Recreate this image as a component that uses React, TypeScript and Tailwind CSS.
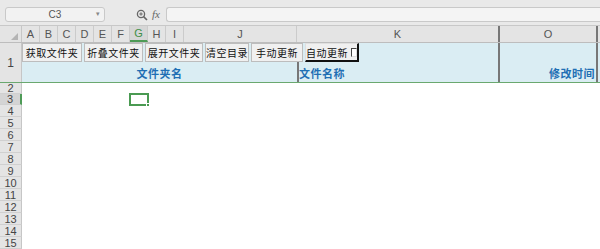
import React from "react";

const cjk = { fontFamily: '"Noto Sans CJK SC", "Noto Sans", sans-serif' };
const latin = { fontFamily: '"Liberation Sans", Arial, sans-serif' };

const cols: { name: string; w: number }[] = [
  { name: "A", w: 18 },
  { name: "B", w: 18 },
  { name: "C", w: 18 },
  { name: "D", w: 18 },
  { name: "E", w: 18 },
  { name: "F", w: 18 },
  { name: "G", w: 18 },
  { name: "H", w: 18 },
  { name: "I", w: 18 },
  { name: "J", w: 113 },
  { name: "K", w: 203 },
  { name: "O", w: 98 },
  { name: "", w: 20 },
];

const rowHeights = [11, 11, 12, 12, 12, 12, 12, 12, 12, 12, 12, 12, 12, 12];

function Button({ label, w, last }: { label: string; w: number; last?: boolean }) {
  return (
    <div
      className={
        "flex h-[19px] shrink-0 items-center justify-center whitespace-nowrap bg-[#f0f0f0] text-[10px] tracking-[0.5px] text-[#111] " +
        (last
          ? "border-t border-l border-t-[#e0e0e0] border-l-[#e0e0e0] border-r-2 border-b-2 border-r-[#111] border-b-[#111]"
          : "border border-[#bdbdbd]")
      }
      style={{ width: w, ...cjk }}
    >
      {label}
      {last && (
        <span className="ml-[3px] inline-block h-[9px] w-[8px] border-l border-t border-l-[#444] border-t-[#444] border-r border-b border-r-[#ddd] border-b-[#ddd] bg-white" />
      )}
    </div>
  );
}

export default function App() {
  return (
    <div className="relative h-[249px] w-[600px] overflow-hidden bg-white" style={latin}>
      {/* formula bar */}
      <div className="flex h-[26px] items-center border-b border-[#c8c8c8] bg-[#e9e9e9] pt-[4px]">
        <div className="ml-[5px] flex h-[15px] w-[100px] items-center rounded-[3px] border border-[#c9c9c9] bg-[#f2f2f2] text-[10px] text-[#555]">
          <span className="flex-1 pl-[8px] text-center">C3</span>
          <span className="pr-[4px] text-[7px] text-[#888]">▾</span>
        </div>
        <div className="ml-[29px] flex w-[16px] items-center justify-center">
          <svg width="12" height="12" viewBox="0 0 12 12">
            <circle cx="5" cy="5" r="3.6" fill="none" stroke="#666" strokeWidth="1.3" />
            <line x1="7.6" y1="7.6" x2="11" y2="11" stroke="#666" strokeWidth="1.6" />
            <line x1="3.3" y1="5" x2="6.7" y2="5" stroke="#666" strokeWidth="1" />
            <line x1="5" y1="3.3" x2="5" y2="6.7" stroke="#666" strokeWidth="1" />
          </svg>
        </div>
        <span className="ml-[2px] text-[11px] italic text-[#666]" style={{ fontFamily: '"Liberation Serif", serif' }}>
          fx
        </span>
        <div className="ml-[6px] h-[15px] flex-1 rounded-l-[3px] border border-r-0 border-[#c9c9c9] bg-[#f4f4f4]" />
      </div>

      {/* column header */}
      <div className="flex h-[17px] border-b border-[#bdbdbd] bg-[#e4e4e4]">
        <div className="relative w-[22px] shrink-0 border-r border-[#c6c6c6]">
          <svg className="absolute bottom-[2px] right-[3px]" width="7" height="7" viewBox="0 0 7 7">
            <polygon points="7,0 7,7 0,7" fill="#b4b4b4" />
          </svg>
        </div>
        {cols.map((c, i) => (
          <div
            key={i}
            className={
              "flex shrink-0 items-center justify-center text-[11px] " +
              (c.name === "G"
                ? "border-b-2 border-[#4e9b57] bg-[#d6d6d6] text-[#3f8f48]"
                : "text-[#555]") +
              (c.name === "K" || c.name === "O" ? " border-r-2 border-r-[#777]" : " border-r border-r-[#cbcbcb]")
            }
            style={{ width: c.w }}
          >
            {c.name}
          </div>
        ))}
      </div>

      {/* row 1 */}
      <div className="relative flex h-[40px] border-b border-[#6aa86f]">
        <div className="flex w-[22px] shrink-0 items-center justify-center border-r border-[#c6c6c6] bg-[#e4e4e4] text-[12px] text-[#444]">
          1
        </div>
        <div className="flex w-[275px] shrink-0 items-end justify-center bg-[#daedf3] pb-[1px]">
          <span className="text-[11px] font-bold tracking-[0.5px] text-[#1f6fb4]" style={cjk}>
            文件夹名
          </span>
        </div>
        <div className="flex w-[203px] shrink-0 items-end border-l-2 border-r-2 border-[#777] bg-[#daedf3] pb-[1px]">
          <span className="text-[11px] font-bold tracking-[0.5px] text-[#1f6fb4]" style={cjk}>
            文件名称
          </span>
        </div>
        <div className="flex w-[98px] shrink-0 items-end justify-end border-r-2 border-[#777] bg-[#daedf3] pb-[1px] pr-[1px]">
          <span className="text-[11px] font-bold tracking-[0.5px] text-[#1f6fb4]" style={cjk}>
            修改时间
          </span>
        </div>
        <div className="flex-1 bg-[#daedf3]" />

        {/* floating buttons */}
        <div className="absolute left-[22px] top-0 flex gap-[2px]">
          <Button label="获取文件夹" w={60} />
          <Button label="折叠文件夹" w={59} />
          <Button label="展开文件夹" w={58} />
          <Button label="清空目录" w={44} />
          <Button label="手动更新" w={52} />
          <Button label="自动更新" w={54} last />
        </div>
      </div>

      {/* body rows */}
      <div className="relative">
        {rowHeights.map((h, i) => (
          <div key={i} className="flex" style={{ height: h }}>
            <div
              className={
                "flex w-[22px] shrink-0 items-center justify-center overflow-hidden border-b border-[#d0d0d0] text-[11px] leading-[10px] " +
                (i === 1
                  ? "border-r-2 border-r-[#4e9b57] bg-[#d4d4d4] text-[#444]"
                  : "border-r border-r-[#c6c6c6] bg-[#e4e4e4] text-[#444]")
              }
            >
              {i + 2}
            </div>
            <div className="flex-1 bg-white" />
          </div>
        ))}
        {/* selected cell */}
        <div className="absolute left-[129px] top-[10px] h-[13px] w-[20px] border-2 border-[#4a9a52]">
          <div className="absolute -bottom-[3px] -right-[3px] h-[4px] w-[4px] border border-white bg-[#4a9a52]" />
        </div>
      </div>
    </div>
  );
}
